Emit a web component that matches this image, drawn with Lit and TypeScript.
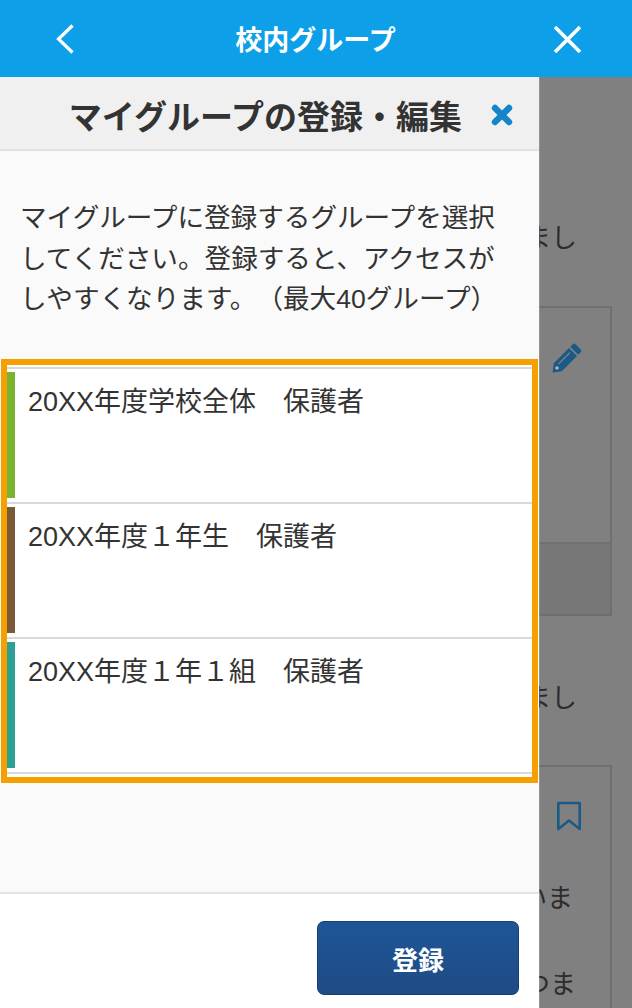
import { LitElement, html, css } from "lit";
import { customElement } from "lit/decorators.js";

const GROUPS = [
  { name: "20XX年度学校全体　保護者", color: "#76b52d" },
  { name: "20XX年度１年生　保護者", color: "#7a5a36" },
  { name: "20XX年度１年１組　保護者", color: "#2da096" },
];

@customElement("app-root")
export class AppRoot extends LitElement {
  static styles = css`
    :host {
      display: block;
      width: 632px;
      height: 1008px;
      overflow: hidden;
      font-family: "Liberation Sans", "Noto Sans CJK JP", sans-serif;
      color: #333;
      text-spacing-trim: space-all;
    }
    .app { display: flex; flex-direction: column; height: 1008px; }
    .topbar {
      flex: none;
      height: 77px;
      box-sizing: border-box;
      background: #0da0e9;
      display: flex;
      align-items: center;
      justify-content: space-between;
      padding: 0 50px 0 55px;
      color: #fff;
    }
    .topbar svg { display: block; margin-top: 1px; }
    .topbar h1 { margin: 5px 0 0 3px; font-size: 27px; font-weight: 700; line-height: 40px; }
    .stage { flex: 1; position: relative; background: #808080; overflow: hidden; }
    .behind {
      display: flex;
      flex-direction: column;
      align-items: flex-end;
      padding-right: 20px;
      color: #2c2c2c;
      font-size: 26px;
    }
    .behind-line { width: 100%; box-sizing: border-box; text-align: right; white-space: nowrap; line-height: 40px; padding-right: 35px; }
    .line-1 { margin-top: 141px; }
    .line-2 { margin-top: 62px; }
    .card { width: 400px; box-sizing: border-box; border: 2px solid #6f6f6f; display: flex; flex-direction: column; }
    .card-1 { height: 310px; margin-top: 48px; }
    .card-main { flex: 1; display: flex; justify-content: flex-end; padding: 35px 28px 0 0; }
    .card-foot { flex: none; height: 70px; background: #777; border-top: 2px solid #6f6f6f; }
    .card-2 { margin-top: 47px; height: 300px; }
    .card-2 .card-main { padding: 34px 28px 0 0; flex: none; }
    .card-2 .behind-line { padding-right: 37px; margin-top: 49px; line-height: 36px; }
    .card-2 .behind-line + .behind-line { margin-top: 50px; padding-right: 34px; }
    .drawer {
      position: absolute;
      left: 0;
      top: 0;
      bottom: 0;
      width: 539px;
      display: flex;
      flex-direction: column;
      background: #fafafa;
      box-shadow: 1px 0 0 rgba(255,255,255,0.15);
    }
    .drawer-head {
      flex: none;
      height: 74px;
      box-sizing: border-box;
      background: #f0f0f0;
      border-bottom: 2px solid #e2e2e2;
      display: flex;
      align-items: center;
      justify-content: flex-end;
      gap: 29px;
      padding: 0 26px 0 0;
    }
    .drawer-head h2 { margin: 10px 0 0; font-size: 33px; font-weight: 700; line-height: 44px; white-space: nowrap; }
    .drawer-head svg { display: block; margin-top: 4px; }
    .drawer-body { flex: 1; min-height: 0; }
    .intro { margin: 47px 0 0; padding: 0 20px; font-size: 26.6px; line-height: 40.5px; color: #333; }
    .list {
      margin: 39px 0 0 1px;
      width: 537px;
      box-sizing: border-box;
      border: 6px solid #f4a000;
      background: #fff;
      padding: 2px 0 3px;
    }
    .row {
      display: flex;
      border-top: 2px solid #d9d9d9;
      padding: 3px 0 3.5px;
      height: 135px;
      box-sizing: border-box;
    }
    .row:last-child { border-bottom: 2px solid #d9d9d9; height: 137px; }
    .bar { flex: none; width: 8px; height: 126.5px; }
    .row-name { margin: 10px 0 0 13px; font-size: 27px; line-height: 40px; color: #333; }
    .drawer-foot {
      flex: none;
      height: 116px;
      box-sizing: border-box;
      background: #fff;
      border-top: 2px solid #e4e4e4;
      display: flex;
      justify-content: flex-end;
      padding: 27px 20px 0 0;
    }
    .submit {
      width: 202px;
      height: 74px;
      box-sizing: border-box;
      border: 1px solid #16406f;
      border-radius: 7px;
      background: linear-gradient(#1e5597, #1f4b85);
      color: #fff;
      font: inherit;
      font-size: 26px;
      font-weight: 700;
      padding: 0;
    }
  `;

  render() {
    return html`
      <div class="app">
        <header class="topbar">
          <svg width="20" height="30" viewBox="0 0 20 30" fill="none" stroke="#fff" stroke-width="3.2">
            <path d="M17.5 1.5 3.5 15l14 13.5" />
          </svg>
          <h1>校内グループ</h1>
          <svg width="29" height="29" viewBox="0 0 29 29" fill="none" stroke="#fff" stroke-width="3.6">
            <path d="M2 2l25 25M27 2 2 27" />
          </svg>
        </header>
        <div class="stage">
          <div class="behind">
            <div class="behind-line line-1">まし</div>
            <div class="card card-1">
              <div class="card-main">
                <svg width="30" height="30" viewBox="0 0 30 30">
                  <path fill="#1b5a85" d="M20.8 1.2a2 2 0 0 1 2.8 0l5.2 5.2a2 2 0 0 1 0 2.8l-2.6 2.6-8-8zM17 5l8 8-15.2 15.2L0.6 29.4 1.8 20.2z" />
                  <path fill="none" stroke="#808080" stroke-width="1.2" d="M18 9.5 6.5 21" />
                  <circle cx="5" cy="25" r="1.8" fill="#a9b4bb" />
                </svg>
              </div>
              <div class="card-foot"></div>
            </div>
            <div class="behind-line line-2">まし</div>
            <div class="card card-2">
              <div class="card-main">
                <svg width="26" height="30" viewBox="0 0 26 30" fill="none" stroke="#1b5a85" stroke-width="2.6" stroke-linejoin="round">
                  <path d="M2.3 2h21.4v26L13 19.5 2.3 28z" />
                </svg>
              </div>
              <div class="behind-line">いま</div>
              <div class="behind-line">つま</div>
            </div>
          </div>
          <aside class="drawer">
            <div class="drawer-head">
              <h2>マイグループの登録・編集</h2>
              <svg width="22" height="22" viewBox="0 0 22 22" fill="none" stroke="#1585c8" stroke-width="6.4" stroke-linecap="round">
                <path d="M4 4l14 14M18 4 4 18" />
              </svg>
            </div>
            <div class="drawer-body">
              <p class="intro">マイグループに登録するグループを選択してください。登録すると、アクセスがしやすくなります。（最大40グループ）</p>
              <div class="list">
                ${GROUPS.map(
                  (g) => html`<div class="row">
                    <span class="bar" style="background:${g.color}"></span>
                    <span class="row-name">${g.name}</span>
                  </div>`
                )}
              </div>
            </div>
            <div class="drawer-foot">
              <button class="submit">登録</button>
            </div>
          </aside>
        </div>
      </div>
    `;
  }
}
